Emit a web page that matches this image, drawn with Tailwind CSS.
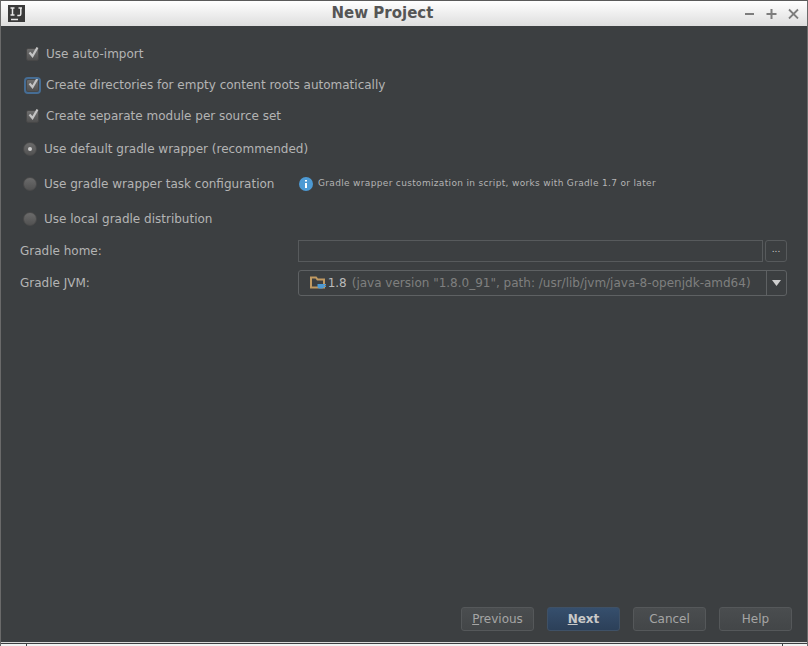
<!DOCTYPE html>
<html><head><meta charset="utf-8"><script src="https://cdn.jsdelivr.net/npm/@tailwindcss/browser@4"></script></head>
<body class="m-0">
<div class="w-[808px] h-[646px] flex flex-col overflow-hidden bg-[#3c3f41] font-['DejaVu_Sans',sans-serif] text-[12px] text-[#b4b4b4]">
  <header class="h-[26px] shrink-0 flex items-center border-t border-t-[#5a5a5a] border-x border-x-[#6a6a6a] bg-gradient-to-b from-[#ffffff] to-[#dedede] relative">
    <div class="ml-[7px] w-[17px] h-[17px] bg-[#3a3a3a]">
      <svg width="17" height="17" viewBox="0 0 17 17"><path d="M2.500 3h4M4.500 3v7M2.500 10h4M10.500 3h3.500M12.800 3v6q0 1.500-1.500 1.500h-2" stroke="#e8e8e8" stroke-width="1.500" fill="none"/><path d="M3 14.500h7" stroke="#e8e8e8" stroke-width="1.500"/></svg>
    </div>
    <h1 class="flex-1 text-center text-[15px] font-bold text-[#555555] pr-[4px]">New Project</h1>
    <div class="flex items-center gap-[11px] mr-[8px]">
      <svg width="11" height="11" viewBox="0 0 11 11"><path d="M1 6h9" stroke="#7d7d7d" stroke-width="2"/></svg>
      <svg width="11" height="11" viewBox="0 0 11 11"><path d="M0.500 6h10M5.500 1v10" stroke="#7d7d7d" stroke-width="2"/></svg>
      <svg width="11" height="11" viewBox="0 0 11 11"><path d="M1 1.500l9 9M10 1.500l-9 9" stroke="#7d7d7d" stroke-width="1.800"/></svg>
    </div>
  </header>
  <main class="flex-1 flex flex-col border-x border-x-[#6a6a6a] pl-[19px] pr-[20px] pt-[21px]">
    <div class="flex flex-col gap-[17px] pl-[6px]">
      <label class="flex items-center h-[14px] gap-[7px]">
        <span class="w-[13px] h-[13px] rounded-[2px] bg-gradient-to-b from-[#6e6e6e] to-[#505050] border border-[#474747]"><svg width="15" height="15" viewBox="0 0 15 15" class="-mt-[3px]"><path d="M2.500 6.500l3 3.500l5-8.500" stroke="#c4c4c4" stroke-width="2.200" fill="none"/></svg></span>
        <span>Use auto-import</span>
      </label>
      <label class="flex items-center h-[14px] gap-[7px]">
        <span class="w-[13px] h-[13px] rounded-[2px] bg-gradient-to-b from-[#6e6e6e] to-[#505050] border border-[#474747] outline-2 outline-[#466d94]"><svg width="15" height="15" viewBox="0 0 15 15" class="-mt-[3px]"><path d="M2.500 6.500l3 3.500l5-8.500" stroke="#c4c4c4" stroke-width="2.200" fill="none"/></svg></span>
        <span>Create directories for empty content roots automatically</span>
      </label>
      <label class="flex items-center h-[14px] gap-[7px]">
        <span class="w-[13px] h-[13px] rounded-[2px] bg-gradient-to-b from-[#6e6e6e] to-[#505050] border border-[#474747]"><svg width="15" height="15" viewBox="0 0 15 15" class="-mt-[3px]"><path d="M2.500 6.500l3 3.500l5-8.500" stroke="#c4c4c4" stroke-width="2.200" fill="none"/></svg></span>
        <span>Create separate module per source set</span>
      </label>
    </div>
    <div class="flex flex-col gap-[21px] mt-[19px] pl-[3px]">
      <label class="flex items-center h-[14px] gap-[7px]">
        <span class="w-[14px] h-[14px] rounded-full bg-gradient-to-b from-[#6b6b6b] to-[#525252] border border-[#4a4a4a] flex items-center justify-center"><span class="w-[4px] h-[4px] rounded-full bg-[#d0d0d0]"></span></span>
        <span>Use default gradle wrapper (recommended)</span>
      </label>
      <div class="flex items-center h-[14px]">
        <label class="flex items-center gap-[7px] w-[276px]">
          <span class="w-[14px] h-[14px] rounded-full bg-gradient-to-b from-[#6b6b6b] to-[#525252] border border-[#4a4a4a]"></span>
          <span>Use gradle wrapper task configuration</span>
        </label>
        <svg width="14" height="14" viewBox="0 0 14 14"><circle cx="7" cy="7" r="7" fill="#4d9ad4"/><path d="M7 3v1.600M7 6v5" stroke="#fff" stroke-width="2"/></svg>
        <span class="ml-[5px] text-[9px] tracking-[0.33px]">Gradle wrapper customization in script, works with Gradle 1.7 or later</span>
      </div>
      <label class="flex items-center h-[14px] gap-[7px]">
        <span class="w-[14px] h-[14px] rounded-full bg-gradient-to-b from-[#6b6b6b] to-[#525252] border border-[#4a4a4a]"></span>
        <span>Use local gradle distribution</span>
      </label>
    </div>
    <div class="flex items-center mt-[14px] h-[22px]">
      <span class="w-[278px]">Gradle home:</span>
      <div class="w-[466px] h-[22px] border border-[#575a5c]"></div>
      <button class="ml-[2px] w-[22px] h-[22px] border border-[#575a5c] rounded-[3px] flex items-center justify-center"><span class="text-[#cccccc] text-[9px] leading-none -mt-[3px]">...</span></button>
    </div>
    <div class="flex items-center mt-[8px] h-[26px]">
      <span class="w-[278px]">Gradle JVM:</span>
      <div class="w-[490px] h-[26px] border border-[#5e6163] rounded-[3px] flex items-center">
        <div class="flex-1 flex items-center pl-[11px] min-w-0 whitespace-nowrap overflow-hidden">
          <svg width="16" height="14" viewBox="0 0 16 14" class="shrink-0"><path d="M1 1.500h5l1.500 2h6.500v8h-13z" fill="none" stroke="#c19a62" stroke-width="2"/><path d="M7.500 8h6.500v2.500q0 2-2 2h-2.500q-2 0-2-2z" fill="#4d9ad4"/><path d="M14 8.500h2v2h-2" stroke="#4d9ad4" fill="none"/></svg>
          <span class="ml-[2px] text-[#bbbbbb]">1.8</span>
          <span class="ml-[5px] text-[#7f7f7f]">(java version "1.8.0_91", path: /usr/lib/jvm/java-8-openjdk-amd64)</span>
        </div>
        <div class="w-[20px] h-full border-l border-l-[#5e6163] flex items-center justify-center"><svg width="9" height="6" viewBox="0 0 9 6"><path d="M0 0h9l-4.500 6z" fill="#cfcfcf"/></svg></div>
      </div>
    </div>
    <footer class="mt-auto flex justify-end gap-[13px] mb-[11px] mr-[-5px]">
      <button class="w-[73px] h-[24px] rounded-[3px] border border-[#55585a] bg-gradient-to-b from-[#4a4d4f] to-[#434648] text-[#a5a5a5]"><u>P</u>revious</button>
      <button class="w-[73px] h-[24px] rounded-[3px] border border-[#3f5166] bg-gradient-to-b from-[#364f6d] to-[#2c4059] font-bold text-[#c8c8c8]"><u>N</u>ext</button>
      <button class="w-[73px] h-[24px] rounded-[3px] border border-[#55585a] bg-gradient-to-b from-[#4a4d4f] to-[#434648] text-[#a5a5a5]">Cancel</button>
      <button class="w-[73px] h-[24px] rounded-[3px] border border-[#55585a] bg-gradient-to-b from-[#4a4d4f] to-[#434648] text-[#a5a5a5]">Help</button>
    </footer>
  </main>
  <div class="h-[4px] shrink-0 bg-[#3c3f41] border-x border-x-[#6a6a6a] flex flex-col">
    <div class="h-[1px] bg-[#d8d8d8]"></div>
    <div class="h-[2px] mt-[1px] flex gap-[1px]"><div class="w-[25px] bg-[#f2f2f2]"></div><div class="flex-1 bg-[#f2f2f2]"></div><div class="w-[24px] bg-[#f2f2f2]"></div></div>
  </div>
</div>
</body></html>
